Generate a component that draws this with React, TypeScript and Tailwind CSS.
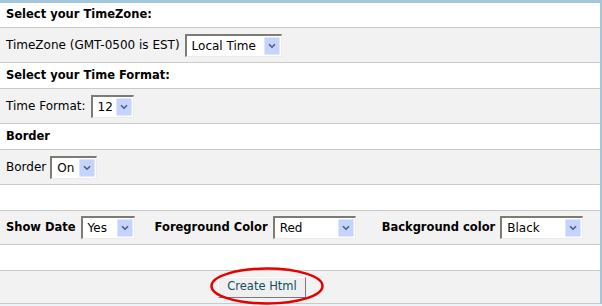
import React from "react";

function Chevron() {
  return (
    <span className="flex items-center justify-center w-[16px] h-[18px] bg-[#c4d4fc] border border-[#dce6fe] rounded-[1px]">
      <svg width="8" height="6" viewBox="0 0 8 6">
        <path d="M1 1.2 L4 4.2 L7 1.2" fill="none" stroke="#4a5d85" strokeWidth="1.6" />
      </svg>
    </span>
  );
}

function Sel({ text, w }: { text: string; w: string }) {
  return (
    <span
      className={`inline-flex items-center justify-between h-[23px] bg-white border-t-2 border-l-2 border-t-[#7c7c74] border-l-[#7c7c74] border-r border-b border-r-[#ecebe6] border-b-[#ecebe6] pl-[5px] pr-[1px] text-[12px] ${w}`}
    >
      <span className="leading-none">{text}</span>
      <Chevron />
    </span>
  );
}

function Header({ children, h }: { children?: React.ReactNode; h: string }) {
  return (
    <div className={`${h} flex items-center pl-[6px] bg-white border-b border-[#cacaca] font-bold text-[11.5px]`}>
      {children}
    </div>
  );
}

function Row({ children, h }: { children?: React.ReactNode; h: string }) {
  return (
    <div className={`${h} flex items-center pl-[6px] bg-[#f2f2f2] border-b border-[#cacaca]`}>
      {children}
    </div>
  );
}

export default function App() {
  return (
    <div className="relative w-[602px] h-[306px] bg-[#edf4f8] text-[12px] text-black font-['DejaVu_Sans','Liberation_Sans',sans-serif]">
      <div className="border-t-[3px] border-r-2 border-[#a2c6db]">
        <Header h="h-[25px]">Select your TimeZone:</Header>
        <Row h="h-[35px]">
          <span className="mr-[5px]">TimeZone (GMT-0500 is EST)</span>
          <Sel text="Local Time" w="w-[97px]" />
        </Row>
        <Header h="h-[26px]">Select your Time Format:</Header>
        <Row h="h-[35px]">
          <span className="mr-[5px]">Time Format:</span>
          <Sel text="12" w="w-[43px]" />
        </Row>
        <Header h="h-[26px]">Border</Header>
        <Row h="h-[35px]">
          <span className="mr-[4px]">Border</span>
          <Sel text="On" w="w-[47px]" />
        </Row>
        <Header h="h-[26px]" />
        <Row h="h-[34px]">
          <span className="font-bold text-[11.5px] mr-[5px]">Show Date</span>
          <Sel text="Yes" w="w-[54px]" />
          <span className="font-bold text-[11.5px] ml-[20px] mr-[5px]">Foreground Color</span>
          <Sel text="Red" w="w-[83px]" />
          <span className="font-bold text-[11.5px] ml-[26px] mr-[5px]">Background color</span>
          <Sel text="Black" w="w-[83px]" />
        </Row>
        <Header h="h-[26px]" />
        <div className="h-[33px] flex items-center bg-[#f2f2f2] border-b border-[#cacaca]">
          <button className="ml-[218px] w-[88px] h-[21px] bg-[#efefef] border border-t-white border-l-white border-r-[#7a7a7a] border-b-[#7a7a7a] text-[11.5px] text-[#0f4f5f] leading-none">
            Create Html
          </button>
        </div>
      </div>
      <svg className="absolute left-[209px] top-[266px] pointer-events-none" width="116" height="40" viewBox="0 0 116 40">
        <ellipse cx="58" cy="20" rx="55.5" ry="17.5" fill="none" stroke="#e60000" strokeWidth="2.5" />
      </svg>
    </div>
  );
}
